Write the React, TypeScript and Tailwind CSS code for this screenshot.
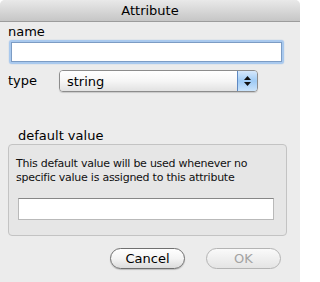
const font = { fontFamily: '"DejaVu Sans", "Lucida Grande", Verdana, sans-serif' };

const App = () => (
  <div className="w-[300px] h-[282px] bg-white">
    <div className="w-[300px] h-[282px] bg-[#ececec] rounded-t-[5px] overflow-hidden text-black" style={font}>
      {/* title bar */}
      <div className="h-[22px] bg-gradient-to-b from-[#e9e9e9] to-[#c6c6c6] border-b border-[#9c9c9c] flex items-center justify-center text-[13px] leading-none">
        Attribute
      </div>

      {/* name */}
      <div className="pl-2 mt-[2px] text-[13px] leading-4">name</div>
      <div className="ml-[9px] w-[275px] h-[24px] rounded-[3px] border-[2px] border-[#a9c9ee] shadow-[0_0_1px_#7fa8dc]">
        <div className="h-full bg-white border border-[#7c9cc4]" />
      </div>

      {/* type */}
      <div className="mt-[6px] flex items-center h-[22px]">
        <div className="pl-2 w-[59px] text-[13px] leading-4">type</div>
        <div className="w-[199px] h-[22px] rounded-[4px] border border-[#8c8c8c] flex overflow-hidden shadow-[0_1px_1px_rgba(0,0,0,0.15)]">
          <div className="flex-1 bg-gradient-to-b from-white via-[#f6f6f6] to-[#e2e2e2] pl-[7px] flex items-center text-[13px] leading-none">
            string
          </div>
          <div className="w-[20px] border-l border-[#5f89c2] bg-gradient-to-b from-[#d6e8fb] via-[#9fcbf5] to-[#cbe4fb] flex flex-col items-center justify-center gap-[2px]">
            <svg width="7" height="4" viewBox="0 0 7 4"><path d="M3.5 0L7 4H0z" fill="#111" /></svg>
            <svg width="7" height="4" viewBox="0 0 7 4"><path d="M0 0h7L3.5 4z" fill="#111" /></svg>
          </div>
        </div>
      </div>

      {/* default value group */}
      <div className="pl-[18px] mt-[36px] text-[13px] leading-4">default value</div>
      <div className="ml-2 w-[279px] h-[92px] rounded-[4px] border border-[#c3c3c3] bg-[#e6e6e6] pt-[12px]">
        <div className="pl-[7px] text-[11px] leading-[14px] tracking-[-0.25px] text-[#111]">
          This default value will be used whenever no<br />specific value is assigned to this attribute
        </div>
        <div className="ml-[9px] mt-[13px] w-[256px] h-[22px] bg-white border border-[#b9b9b9] border-t-[#878787]" />
      </div>

      {/* buttons */}
      <div className="flex mt-[12px] pl-[110px] gap-[21px]">
        <div className="w-[75px] h-[21px] rounded-full border border-[#707070] bg-gradient-to-b from-white via-[#f4f4f4] to-[#dcdcdc] flex items-center justify-center text-[13px] leading-none shadow-[0_1px_1px_rgba(0,0,0,0.2)]">
          Cancel
        </div>
        <div className="w-[75px] h-[21px] rounded-full border border-[#b4b4b4] bg-gradient-to-b from-[#fafafa] to-[#e4e4e4] flex items-center justify-center text-[13px] leading-none text-[#a3a3a3]">
          OK
        </div>
      </div>
    </div>
  </div>
);

export default App;
